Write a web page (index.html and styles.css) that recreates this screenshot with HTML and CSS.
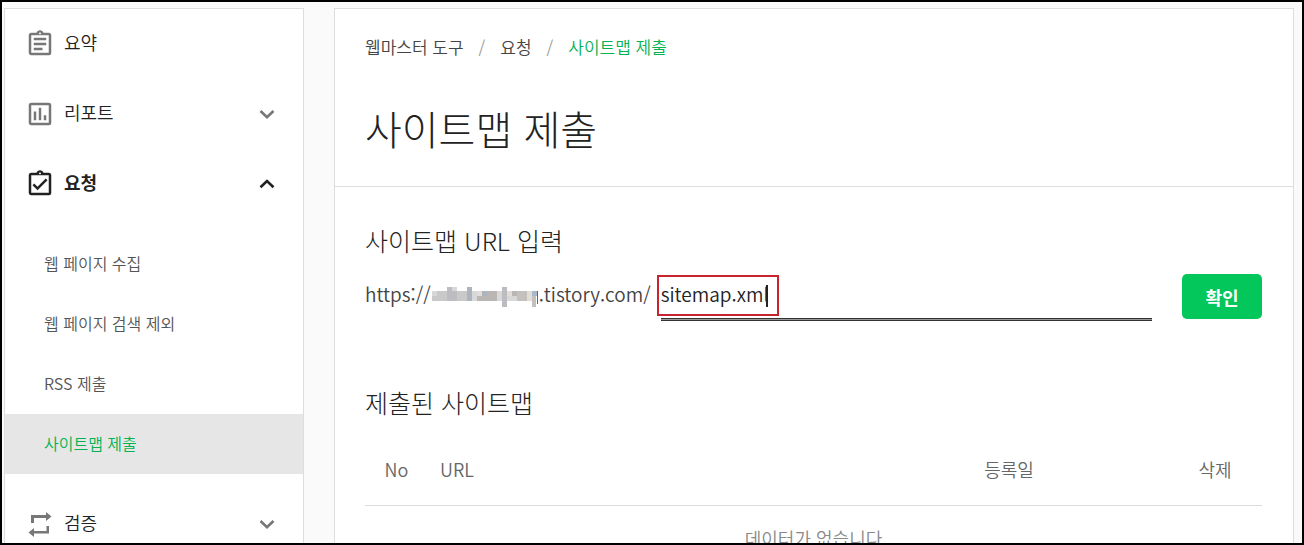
FILE: index.html
```html
<!DOCTYPE html>
<html lang="ko">

<head>
    <meta charset="UTF-8">
    <meta name="viewport" content="width=device-width, initial-scale=1.0">
    <title>사이트맵 제출</title>
    <link rel="stylesheet" href="styles.css">
</head>

<body>
    <div class="frame">
        <nav class="sidebar">
            <a href="#" class="menu-item">
                <svg class="menu-icon" viewBox="0 0 24 24"><path d="M7 15h7v2H7zm0-4h10v2H7zm0-4h10v2H7zm12-4h-4.18C14.4 1.84 13.3 1 12 1s-2.4.84-2.82 2H5a2 2 0 0 0-2 2v14c0 1.1.9 2 2 2h14a2 2 0 0 0 2-2V5a2 2 0 0 0-2-2zm-7-.25c.41 0 .75.34.75.75s-.34.75-.75.75-.75-.34-.75-.75.34-.75.75-.75zM19 19H5V5h14z"/></svg>
                <span>요약</span>
            </a>
            <a href="#" class="menu-item">
                <svg class="menu-icon" viewBox="0 0 24 24"><path d="M9 17H7v-7h2v7zm4 0h-2V7h2v10zm4 0h-2v-4h2v4zm2 2H5V5h14v14zm0-16H5a2 2 0 0 0-2 2v14c0 1.1.9 2 2 2h14a2 2 0 0 0 2-2V5a2 2 0 0 0-2-2z"/></svg>
                <span>리포트</span>
                <svg class="arrow" viewBox="0 0 16 16"><path d="M1.5 5L8 11.2 14.5 5"/></svg>
            </a>
            <a href="#" class="menu-item open">
                <svg class="menu-icon" viewBox="0 0 24 24"><path d="M19 3h-4.18C14.4 1.84 13.3 1 12 1s-2.4.84-2.82 2H5a2 2 0 0 0-2 2v14c0 1.1.9 2 2 2h14a2 2 0 0 0 2-2V5a2 2 0 0 0-2-2zm-7-.25c.41 0 .75.34.75.75s-.34.75-.75.75-.75-.34-.75-.75.34-.75.75-.75zM19 19H5V5h14zM18 9l-1.4-1.4-6.6 6.6-2.6-2.6L6 13l4 4z"/></svg>
                <span>요청</span>
                <svg class="arrow" viewBox="0 0 16 16"><path d="M1.5 11.2L8 5l6.5 6.2"/></svg>
            </a>
            <ul class="submenu">
                <li><a href="#">웹 페이지 수집</a></li>
                <li><a href="#">웹 페이지 검색 제외</a></li>
                <li><a href="#">RSS 제출</a></li>
                <li><a href="#" class="active">사이트맵 제출</a></li>
            </ul>
            <a href="#" class="menu-item">
                <svg class="menu-icon" viewBox="0 0 30 30"><path d="M6 6h15V3l5.5 4.5L21 12V9H9v5H6zM24 24.5H9V28l-5.5-4.5L9 19v3h12.5v-5H24z"/></svg>
                <span>검증</span>
                <svg class="arrow" viewBox="0 0 16 16"><path d="M1.5 5L8 11.2 14.5 5"/></svg>
            </a>
        </nav>

        <main class="content">
            <header class="page-header">
                <div class="breadcrumb">
                    <a href="#">웹마스터 도구</a>
                    <span class="sep">/</span>
                    <a href="#">요청</a>
                    <span class="sep">/</span>
                    <a href="#" class="current">사이트맵 제출</a>
                </div>
                <h1>사이트맵 제출</h1>
            </header>

            <section class="section">
                <h2><label for="sitemapUrl">사이트맵 URL 입력</label></h2>
                <form class="url-form">
                    <div class="site-url">
                        <span>https://</span>
                        <!-- blog name is hidden -->
                        <svg class="mosaic" viewBox="3 0 108 24" shape-rendering="crispEdges">
                            <path fill="#c9c9c9" d="M4 8h15v10H4zM29 8h10v10H29z"/>
                            <path fill="#bdbdc1" d="M19 4h10v14H19zM74 4h5v20h-5z"/>
                            <path fill="#d8d8d8" d="M4 8h5v5H4zM24 4h5v4h-5zM44 8h5v10h-5zM69 8h5v10h-5zM79 13h10v5H79z"/>
                            <path fill="#aeb4bd" d="M39 4h5v14h-5zM54 8h5v5h-5z"/>
                            <path fill="#bab6b3" d="M49 13h10v5H49zM59 8h10v10H59zM84 8h5v5h-5z"/>
                            <path fill="#e3ddd8" d="M49 8h5v5h-5zM79 8h5v5h-5zM99 8h5v10h-5z"/>
                            <path fill="#c4c0bd" d="M89 8h10v10H89zM104 13h4v11h-4z"/>
                            <path fill="#a9b8c8" d="M104 8h5v5h-5z"/>
                            <path fill="#606878" d="M109 8h1v13h-1z"/>
                        </svg>
                        <span>.tistory.com/</span>
                    </div>
                    <div class="url-field">
                        <input type="text" id="sitemapUrl" value="sitemap.xml">
                        <span class="caret"></span>
                        <span class="highlight"></span>
                    </div>
                    <button type="button" class="btn-submit">확인</button>
                </form>
            </section>

            <section class="section">
                <h2>제출된 사이트맵</h2>
                <table class="sitemap-table">
                    <thead>
                        <tr>
                            <th class="col-no">No</th>
                            <th class="col-url">URL</th>
                            <th class="col-date">등록일</th>
                            <th class="col-delete">삭제</th>
                        </tr>
                    </thead>
                    <tbody>
                        <tr>
                            <td colspan="4">데이터가 없습니다</td>
                        </tr>
                    </tbody>
                </table>
            </section>
        </main>
    </div>
</body>

</html>
```
FILE: styles.css
```css
* {
    box-sizing: border-box;
}

body {
    margin: 0;
    font-family: "Noto Sans CJK KR", sans-serif;
    font-weight: 350;
    color: #222;
    background-color: #fafafa;
}

a {
    color: inherit;
    text-decoration: none;
}

.frame {
    display: flex;
    gap: 30px;
    height: 100vh;
    padding: 6px 8px 0 2px;
    border: 2px solid #000;
    overflow: hidden;
}

/* Sidebar */
.sidebar {
    flex: 0 0 300px;
    background-color: #fff;
    border: 1px solid #ddd;
    border-bottom: 0;
}

.menu-item {
    display: flex;
    align-items: center;
    height: 70px;
    padding: 0 28px 0 20px;
    font-size: 18px;
}

.menu-item span {
    padding-bottom: 4px;
}

.menu-icon {
    width: 30px;
    height: 30px;
    margin-right: 9px;
    fill: #777;
}

.arrow {
    width: 16px;
    height: 16px;
    margin-left: auto;
    fill: none;
    stroke: #777;
    stroke-width: 2.6;
}

.menu-item.open {
    font-weight: 700;
}

.menu-item.open .menu-icon {
    fill: #222;
}

.menu-item.open .arrow {
    stroke: #222;
}

.submenu {
    margin: 0;
    padding: 15px 0;
    list-style: none;
}

.submenu a {
    display: block;
    height: 60px;
    padding-left: 39px;
    font-size: 16px;
    line-height: 58px;
    color: #555;
}

.submenu a.active {
    background-color: #e6e6e6;
    color: #03b350;
}

/* Content */
.content {
    flex: 1;
    background-color: #fff;
    border: 1px solid #ddd;
    border-bottom: 0;
}

.page-header {
    padding: 24px 30px 20px;
    border-bottom: 1px solid #ddd;
}

.breadcrumb {
    display: flex;
    gap: 15px;
    font-size: 17px;
    line-height: 28px;
    color: #444;
}

.breadcrumb .sep {
    color: #999;
}

.breadcrumb .current {
    color: #03b350;
}

h1 {
    margin: 29px 0 0;
    font-size: 40px;
    font-weight: 300;
    line-height: 76px;
}

h2 {
    margin: 0;
    font-size: 25px;
    font-weight: 300;
    line-height: 36px;
}

.section {
    padding: 35px 31px 0 30px;
}

.url-form {
    display: flex;
    align-items: flex-start;
    margin: 16px 0 30px;
    font-size: 19px;
}

.site-url {
    display: flex;
    align-items: center;
    height: 39px;
    color: #444;
}

.mosaic {
    width: 108px;
    height: 24px;
    margin-top: 2px;
}

.url-field {
    position: relative;
    flex: 1;
    margin: 0 30px 0 10px;
}

.url-field input {
    display: block;
    width: 100%;
    height: 45px;
    padding: 0 0 6px;
    border: 0;
    border-bottom: 1px solid #333;
    box-shadow: 0 1px 0 #999, 0 2px 0 #333;
    outline: none;
    background: none;
    font: inherit;
    color: #222;
}

.caret {
    position: absolute;
    top: 11px;
    left: 105px;
    width: 2px;
    height: 22px;
    background-color: #222;
}

.highlight {
    position: absolute;
    top: 1px;
    left: -4px;
    width: 122px;
    height: 41px;
    border: 2px solid #c8242f;
    pointer-events: none;
}

.btn-submit {
    width: 80px;
    height: 45px;
    border: 0;
    border-radius: 5px;
    background-color: #03c75a;
    color: #fff;
    font-family: inherit;
    font-size: 18px;
    font-weight: 700;
    cursor: pointer;
}

.sitemap-table {
    width: 100%;
    margin-top: 14px;
    border-collapse: collapse;
    table-layout: fixed;
    font-size: 18px;
    color: #666;
}

th {
    height: 71px;
    padding: 0;
    border-bottom: 1px solid #ddd;
    font-weight: 350;
}

.col-no {
    width: 63px;
}

.col-url {
    padding-left: 12px;
    text-align: left;
}

.col-date {
    width: 318px;
}

.col-delete {
    width: 94px;
}

td {
    height: 66px;
    padding: 0;
    text-align: center;
    color: #888;
}
```
